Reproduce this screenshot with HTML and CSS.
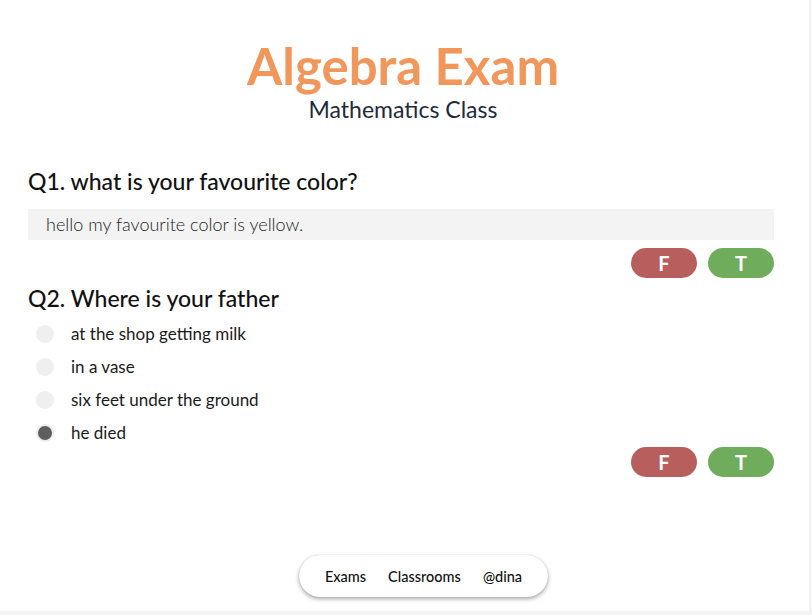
FILE: index.html
```html
<!DOCTYPE html>
<html>
<head>
<meta charset="utf-8">
<link rel="stylesheet" href="styles.css">
</head>
<body>
<div class="page">
  <header class="head">
    <h1 class="title">Algebra Exam</h1>
    <div class="subtitle">Mathematics Class</div>
  </header>

  <section class="question">
    <h2 class="q-title">Q1. what is your favourite color?</h2>
    <div class="answer">hello my favourite color is yellow.</div>
    <div class="grade">
      <button class="btn btn-f">F</button>
      <button class="btn btn-t">T</button>
    </div>
  </section>

  <section class="question">
    <h2 class="q-title q2">Q2. Where is your father</h2>
    <ul class="options">
      <li class="option"><span class="radio"></span>at the shop getting milk</li>
      <li class="option"><span class="radio"></span>in a vase</li>
      <li class="option"><span class="radio"></span>six feet under the ground</li>
      <li class="option"><span class="radio checked"></span>he died</li>
    </ul>
    <div class="grade">
      <button class="btn btn-f">F</button>
      <button class="btn btn-t">T</button>
    </div>
  </section>

  <nav class="nav">
    <a class="nav-link">Exams</a>
    <a class="nav-link">Classrooms</a>
    <a class="nav-link">@dina</a>
  </nav>
</div>
</body>
</html>
```

FILE: styles.css
```css
html {
  background: #f4f4f4;
}
body {
  margin: 0;
  font-family: Lato, "Open Sans", sans-serif;
  color: #111;
}
.page {
  position: relative;
  width: 809px;
  height: 611px;
  background: #fff;
  box-sizing: border-box;
  padding: 36px 35px 0 28px;
}
.head {
  text-align: center;
  padding-left: 4px;
}
.title {
  margin: 0;
  font-size: 51px;
  font-weight: 700;
  color: #f2975b;
  line-height: 60px;
}
.subtitle {
  font-size: 23px;
  color: #1e2a3b;
  line-height: 24px;
  margin-top: 1px;
}
.q-title {
  margin: 46px 0 0;
  font-size: 23px;
  font-weight: 500;
  line-height: 28px;
  color: #111;
}
.q-title.q2 {
  margin-top: 6px;
}
.answer {
  margin-top: 14px;
  height: 31px;
  line-height: 31px;
  background: #f3f3f3;
  padding-left: 18px;
  font-size: 18px;
  font-weight: 300;
  color: #222;
}
.grade {
  display: flex;
  justify-content: flex-end;
  gap: 11px;
  margin-top: 8px;
}
.btn {
  width: 66px;
  height: 30px;
  border: none;
  border-radius: 15px;
  color: #fff;
  font-family: Lato, sans-serif;
  font-weight: 700;
  font-size: 20px;
  padding: 0;
  line-height: 30px;
}
.btn-f { background: #b85f5e; }
.btn-t { background: #6fac5c; }
.options {
  list-style: none;
  margin: 5px 0 0;
  padding: 0;
}
.option {
  display: flex;
  align-items: center;
  height: 33px;
  font-size: 17px;
  color: #1a1a1a;
  padding-left: 8px;
}
.radio {
  width: 18px;
  height: 18px;
  border-radius: 50%;
  background: #efefef;
  margin-right: 17px;
  box-sizing: border-box;
}
.radio.checked {
  background: #5e5e5e;
  border: 2px solid #ececec;
}
.options + .grade {
  margin-top: -2px;
}
.nav {
  position: absolute;
  left: 299px;
  top: 555px;
  width: 249px;
  height: 42px;
  box-sizing: border-box;
  border-radius: 21px;
  background: #fff;
  box-shadow: 0 2px 4px rgba(0,0,0,0.35), 0 0 1px rgba(0,0,0,0.2);
  display: flex;
  align-items: center;
  justify-content: center;
  gap: 22px;
  font-size: 14.5px;
  font-weight: 500;
  color: #111;
}
```
